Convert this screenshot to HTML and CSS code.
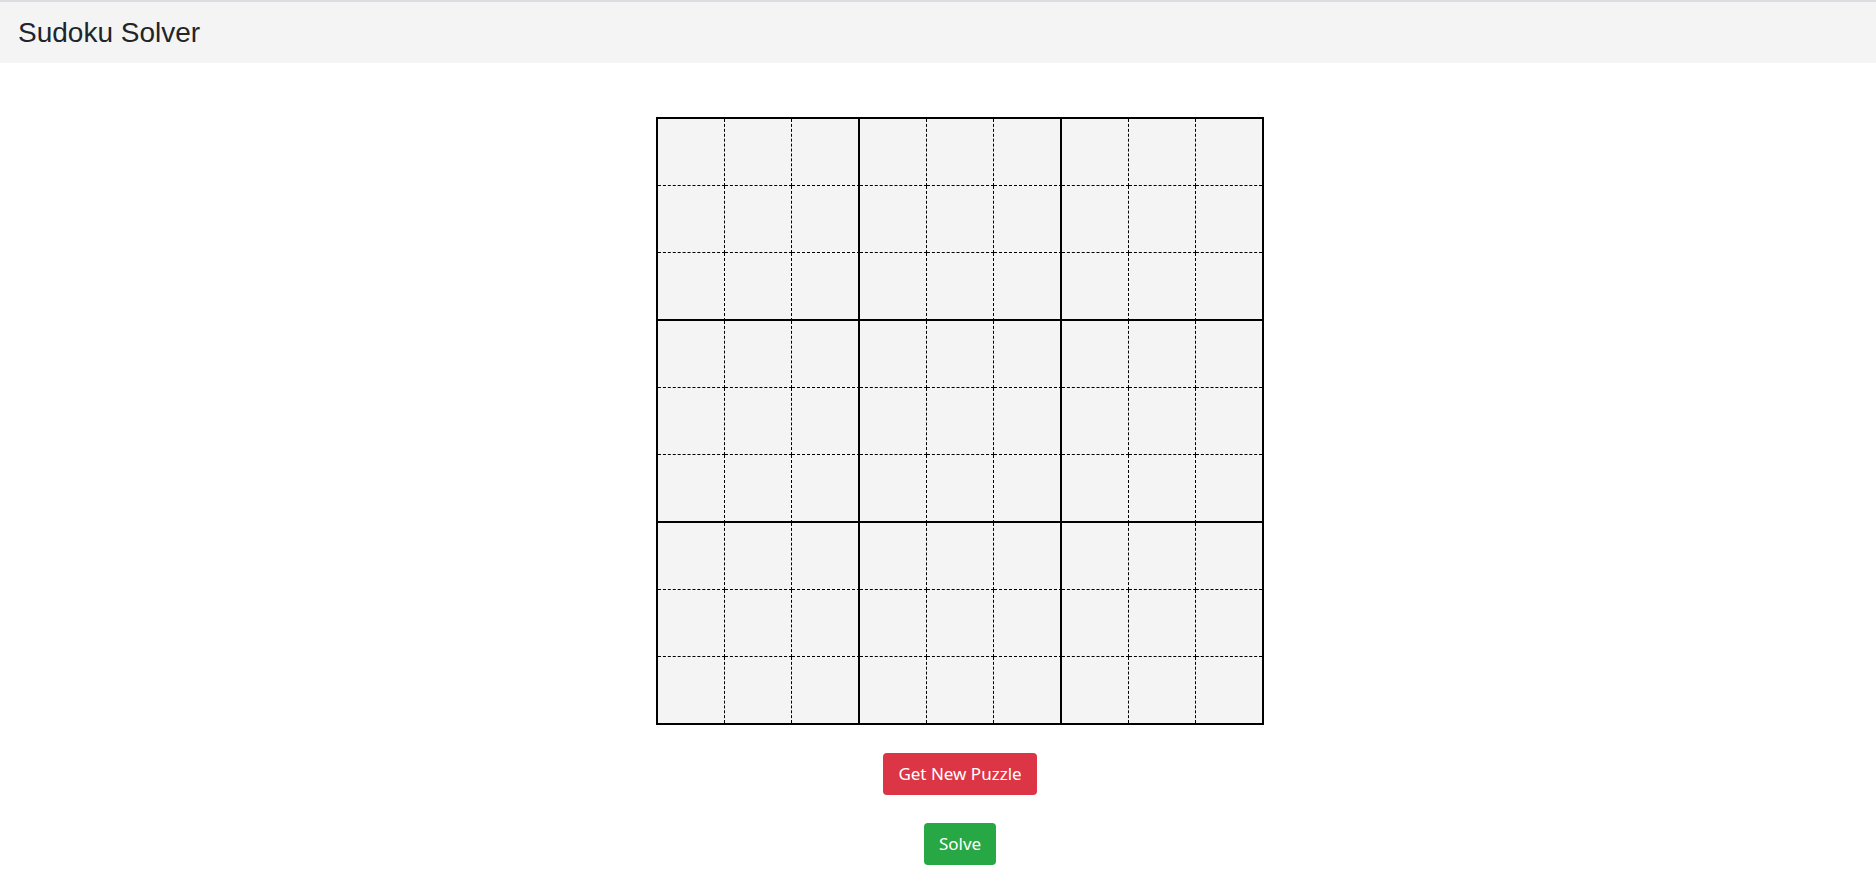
FILE: index.html
```html
<!DOCTYPE html>
<html lang="en">
<head>
<meta charset="utf-8">
<title>Sudoku Solver</title>
<link rel="stylesheet" href="styles.css">
</head>
<body>
<header class="topbar">
  <h1 class="title">Sudoku Solver</h1>
</header>
<main class="main">
  <div class="board" id="board"></div>
  <button class="btn btn-red">Get New Puzzle</button>
  <button class="btn btn-green">Solve</button>
</main>
<script src="script.js"></script>
</body>
</html>
```
FILE: styles.css
```css
* { box-sizing: border-box; }
html, body { margin: 0; padding: 0; background: #fff; }
body { border-top: 2px solid #dcdce0; font-family: "Liberation Sans", Arial, sans-serif; }
.topbar {
  background: #f4f4f4;
  height: 61px;
  display: flex;
  align-items: center;
  padding-left: 18px;
}
.title {
  margin: 0;
  font-weight: 400;
  font-size: 28px;
  color: #212529;
  font-family: "Liberation Sans", Arial, sans-serif;
}
.main {
  display: flex;
  flex-direction: column;
  align-items: center;
  padding-left: 44px;
  padding-top: 54px;
  gap: 28px;
}
.board {
  display: grid;
  grid-template-columns: 67px 67px 68px 67px 67px 68px 67px 67px 66px;
  grid-template-rows: 67px 67px 68px 67px 67px 68px 67px 67px 66px;
  border: 2px solid #000;
  background: #f4f4f4;
}
.cell {
  border-right: 1px dashed #000;
  border-bottom: 1px dashed #000;
}
.cell.c3 { border-right: 2px solid #000; }
.cell.c9 { border-right: none; }
.cell.r3 { border-bottom: 2px solid #000; }
.cell.r9 { border-bottom: none; }
.btn {
  font-family: "Noto Sans", "Open Sans", sans-serif;
  font-size: 17px;
  color: #fff;
  border: none;
  border-radius: 4px;
  padding: 0 15px;
  height: 42px;
  line-height: 42px;
}
.btn-red { background: #dc3545; }
.btn-green { background: #28a745; }
```
FILE: script.js
```js
var b = document.getElementById('board');
for (var r = 1; r <= 9; r++) {
  for (var c = 1; c <= 9; c++) {
    var d = document.createElement('div');
    d.className = 'cell' + (c % 3 === 0 ? ' c3' : '') + (c === 9 ? ' c9' : '') + (r % 3 === 0 ? ' r3' : '') + (r === 9 ? ' r9' : '');
    b.appendChild(d);
  }
}
```
